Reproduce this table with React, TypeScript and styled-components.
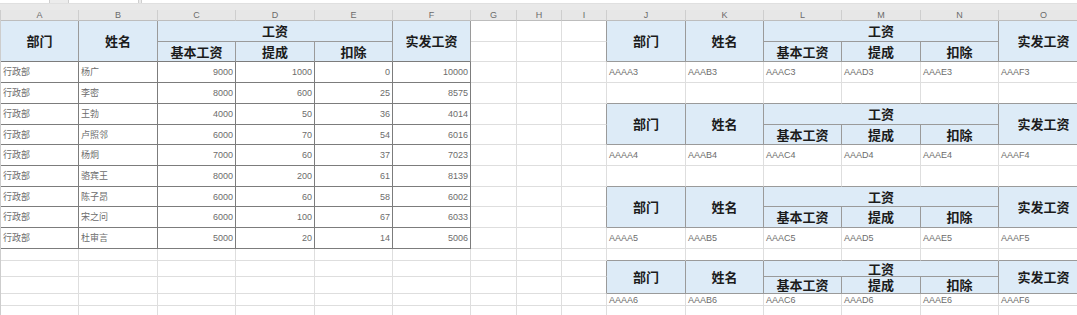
import React from 'react';
import styled, { createGlobalStyle } from 'styled-components';

const Global = createGlobalStyle`
  html, body { margin: 0; padding: 0; background: #ffffff; }
  body { overflow: hidden; font-family: "Liberation Sans", "Noto Sans CJK SC", sans-serif; }
`;

const COL_W = [78, 79, 78, 79, 78, 78, 46, 45, 45, 79, 78, 78, 79, 78, 90];
const ROW_H = [21, 20, 21, 21, 21, 20, 21, 21, 20, 21, 21, 12, 16, 17, 12, 20];
const LETTERS = 'ABCDEFGHIJKLMNO'.split('');

type Kind = 'none' | 'head' | 'data';

const HEAD_ROWS_RIGHT = [1, 2, 5, 6, 9, 10, 13, 14];

const kindAt = (r: number, c: number): Kind => {
  if (c >= 0 && c <= 5 && r >= 1 && r <= 2) return 'head';
  if (c >= 0 && c <= 5 && r >= 3 && r <= 11) return 'data';
  if (c >= 9 && c <= 14 && HEAD_ROWS_RIGHT.includes(r)) return 'head';
  return 'none';
};

const lineColor = (a: Kind, b: Kind) => {
  if (a === 'data' || b === 'data') return '#7c7c7c';
  if (a === 'head' || b === 'head') return '#9a9a9a';
  return '#dedede';
};

const Page = styled.div`
  width: 1077px;
  height: 315px;
  overflow: hidden;
  background: #ffffff;
`;

const TopStrip = styled.div`
  display: flex;
  height: 3px;
  background: #ffffff;
  border-bottom: 1px solid #e0e0e0;
`;

const StripSeg = styled.div<{ $w: number; $shade?: boolean }>`
  width: ${p => p.$w}px;
  flex: none;
  background: ${p => (p.$shade ? '#ececec' : '#ffffff')};
  border-right: 1px solid #cfcfcf;
`;

const StripFill = styled.div`
  flex: 1;
`;

const Band = styled.div`
  height: 6px;
  background: #e9e9e9;
`;

const Sheet = styled.div`
  display: grid;
  grid-template-columns: ${COL_W.map(w => `${w}px`).join(' ')};
  grid-template-rows: 11px ${ROW_H.map(h => `${h}px`).join(' ')};
  border-left: 1px solid #cdcdcd;
`;

const Letter = styled.div`
  box-sizing: border-box;
  display: flex;
  align-items: center;
  justify-content: center;
  background: #e7e7e7;
  border-right: 1px solid #cecece;
  border-bottom: 1px solid #bdbdbd;
  font-family: "Liberation Sans", sans-serif;
  font-size: 9px;
  color: #6b6b6b;
  line-height: 1;
`;

const Cell = styled.div<{
  $r: number;
  $c: number;
  $rs: number;
  $cs: number;
  $right: string;
  $bottom: string;
  $head: boolean;
  $align: 'left' | 'right' | 'center';
}>`
  box-sizing: border-box;
  grid-row: ${p => p.$r + 1} / span ${p => p.$rs};
  grid-column: ${p => p.$c + 1} / span ${p => p.$cs};
  display: flex;
  align-items: center;
  justify-content: ${p => (p.$align === 'left' ? 'flex-start' : p.$align === 'right' ? 'flex-end' : 'center')};
  padding: ${p => (p.$head ? '0' : '1px 2px 0 2px')};
  overflow: ${p => (p.$head ? 'visible' : 'hidden')};
  white-space: nowrap;
  background: ${p => (p.$head ? '#ddebf7' : '#ffffff')};
  border-right: 1px solid ${p => p.$right};
  border-bottom: 1px solid ${p => p.$bottom};
  font-family: ${p => (p.$head ? '"Noto Sans CJK SC", sans-serif' : '"Liberation Sans", "Noto Sans CJK SC", sans-serif')};
  font-size: ${p => (p.$head ? '13px' : '9px')};
  font-weight: ${p => (p.$head ? 700 : 400)};
  color: ${p => (p.$head ? '#1b1b1b' : '#6c6c6c')};
  line-height: ${p => (p.$head ? '14px' : '11px')};
`;

type Spec = {
  r: number;
  c: number;
  rs?: number;
  cs?: number;
  text?: string;
  align?: 'left' | 'right' | 'center';
};

const PEOPLE: [string, number, number, number, number][] = [
  ['杨广', 9000, 1000, 0, 10000],
  ['李密', 8000, 600, 25, 8575],
  ['王勃', 4000, 50, 36, 4014],
  ['卢照邻', 6000, 70, 54, 6016],
  ['杨炯', 7000, 60, 37, 7023],
  ['骆宾王', 8000, 200, 61, 8139],
  ['陈子昂', 6000, 60, 58, 6002],
  ['宋之问', 6000, 100, 67, 6033],
  ['杜审言', 5000, 20, 14, 5006],
];

const headerSpecs = (r: number, c: number): Spec[] => [
  { r, c, rs: 2, text: '部门', align: 'center' },
  { r, c: c + 1, rs: 2, text: '姓名', align: 'center' },
  { r, c: c + 2, cs: 3, text: '工资', align: 'center' },
  { r: r + 1, c: c + 2, text: '基本工资', align: 'center' },
  { r: r + 1, c: c + 3, text: '提成', align: 'center' },
  { r: r + 1, c: c + 4, text: '扣除', align: 'center' },
  { r, c: c + 5, rs: 2, text: '实发工资', align: 'center' },
];

const buildSpecs = (): Spec[] => {
  const specs: Spec[] = [];
  specs.push(...headerSpecs(1, 0));
  PEOPLE.forEach((p, i) => {
    const r = 3 + i;
    specs.push({ r, c: 0, text: '行政部', align: 'left' });
    specs.push({ r, c: 1, text: p[0], align: 'left' });
    specs.push({ r, c: 2, text: String(p[1]), align: 'right' });
    specs.push({ r, c: 3, text: String(p[2]), align: 'right' });
    specs.push({ r, c: 4, text: String(p[3]), align: 'right' });
    specs.push({ r, c: 5, text: String(p[4]), align: 'right' });
  });
  [1, 5, 9, 13].forEach((hr, i) => {
    specs.push(...headerSpecs(hr, 9));
    const n = i + 3;
    ['A', 'B', 'C', 'D', 'E', 'F'].forEach((L, j) => {
      specs.push({ r: hr + 2, c: 9 + j, text: `AAA${L}${n}`, align: 'left' });
    });
  });
  const covered = new Set<string>();
  specs.forEach(s => {
    for (let dr = 0; dr < (s.rs ?? 1); dr++)
      for (let dc = 0; dc < (s.cs ?? 1); dc++) covered.add(`${s.r + dr},${s.c + dc}`);
  });
  for (let r = 1; r <= ROW_H.length; r++)
    for (let c = 0; c < COL_W.length; c++)
      if (!covered.has(`${r},${c}`)) specs.push({ r, c });
  return specs;
};

const SPECS = buildSpecs();

export default function App() {
  return (
    <Page>
      <Global />
      <TopStrip>
        <StripSeg $w={49} />
        <StripSeg $w={18} $shade />
        <StripSeg $w={69} />
        <StripSeg $w={2} $shade />
        <StripFill />
      </TopStrip>
      <Band />
      <Sheet>
        {LETTERS.map(l => (
          <Letter key={l}>{l}</Letter>
        ))}
        {SPECS.map(s => {
          const rs = s.rs ?? 1;
          const cs = s.cs ?? 1;
          const re = s.r + rs - 1;
          const ce = s.c + cs - 1;
          const k = kindAt(re, ce);
          const right = lineColor(k, kindAt(re, ce + 1));
          const bottom = lineColor(k, kindAt(re + 1, ce));
          return (
            <Cell
              key={`${s.r}-${s.c}`}
              $r={s.r}
              $c={s.c}
              $rs={rs}
              $cs={cs}
              $right={right}
              $bottom={bottom}
              $head={k === 'head'}
              $align={s.align ?? 'left'}
            >
              {s.text}
            </Cell>
          );
        })}
      </Sheet>
    </Page>
  );
}
